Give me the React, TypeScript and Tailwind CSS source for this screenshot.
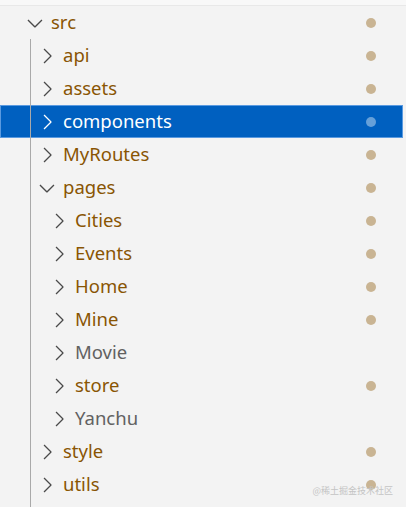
import React from "react";

type Node = { name: string; depth: number; open?: boolean; mod: boolean; selected?: boolean };

const nodes: Node[] = [
  { name: "api", depth: 1, mod: true },
  { name: "assets", depth: 1, mod: true },
  { name: "components", depth: 1, mod: true, selected: true },
  { name: "MyRoutes", depth: 1, mod: true },
  { name: "pages", depth: 1, mod: true, open: true },
  { name: "Cities", depth: 2, mod: true },
  { name: "Events", depth: 2, mod: true },
  { name: "Home", depth: 2, mod: true },
  { name: "Mine", depth: 2, mod: true },
  { name: "Movie", depth: 2, mod: false },
  { name: "store", depth: 2, mod: true },
  { name: "Yanchu", depth: 2, mod: false },
  { name: "style", depth: 1, mod: true },
  { name: "utils", depth: 1, mod: true },
];

function Chevron({ open, color }: { open?: boolean; color: string }) {
  return (
    <svg width="24" height="24" viewBox="0 0 16 16" className="shrink-0">
      {open ? (
        <path
          fill={color}
          d="M7.976 10.072l4.357-4.357.62.618L8.284 11h-.618L3 6.333l.619-.618 4.357 4.357z"
        />
      ) : (
        <path
          fill={color}
          d="M10.072 8.024L5.715 3.667l.618-.62L11 7.716v.618L6.333 13l-.618-.619 4.357-4.357z"
        />
      )}
    </svg>
  );
}

const padClass = ["pl-[23px]", "pl-[35px]", "pl-[47px]"];

function Row({ n }: { n: Node }) {
  const sel = !!n.selected;
  return (
    <div
      className={
        "flex items-center h-[33px] pr-[27px] " +
        padClass[n.depth] +
        (sel ? " bg-[#0060c0] outline outline-1 outline-[#5a9ae0] -outline-offset-1" : "")
      }
    >
      <Chevron open={n.open} color={sel ? "#ffffff" : "#4a4a4a"} />
      <span
        className={
          "ml-[4px] text-[18.5px] leading-none " +
          (sel ? "text-white" : n.mod ? "text-[#895503]" : "text-[#616161]")
        }
      >
        {n.name}
      </span>
      <div className="flex-1" />
      {n.mod && (
        <span
          className={
            "block w-[10px] h-[10px] rounded-full " + (sel ? "bg-[#66a0d9]" : "bg-[#c9b493]")
          }
        />
      )}
    </div>
  );
}

export default function App() {
  return (
    <div
      className="relative w-[406px] h-[507px] overflow-hidden bg-[#f3f3f3]"
      style={{ fontFamily: '"Noto Sans", "Open Sans", sans-serif' }}
    >
      <div className="h-[6px] bg-[#f8f8f8] border-b border-[#e8e8e8]" />
      <div className="pr-[3px]">
        <Row n={{ name: "src", depth: 0, open: true, mod: true }} />
        <div className="relative">
          {nodes.map((n) => (
            <Row key={n.name} n={n} />
          ))}
          <div className="absolute left-[30px] top-0 bottom-[-40px] w-px bg-[#a9a9a9]" />
        </div>
      </div>
      <div
        className="absolute right-[13px] bottom-[12px] text-[9px] leading-none text-[#c4c4c4]"
        style={{ fontFamily: '"Noto Sans CJK SC", sans-serif' }}
      >
        @稀土掘金技术社区
      </div>
    </div>
  );
}
